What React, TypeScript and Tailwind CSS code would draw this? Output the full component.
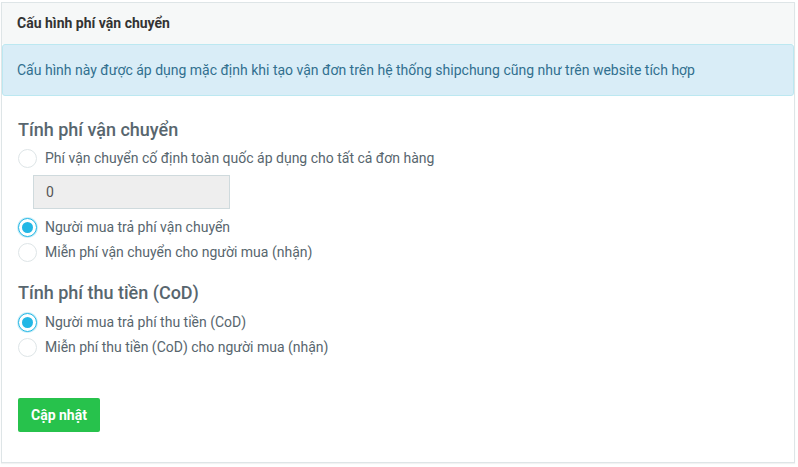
import React from "react";

interface RadioProps {
  label: string;
  checked?: boolean;
}

function Radio({ label, checked }: RadioProps) {
  return (
    <label className="flex items-center h-[25px] text-[14px] text-[#58666e]">
      {checked ? (
        <span className="w-[19px] h-[19px] rounded-full border border-[#23b7e5] shadow-[0_0_0_1px_rgba(35,183,229,0.25)] bg-white flex items-center justify-center">
          <span className="w-[11px] h-[11px] rounded-full bg-[#23b7e5]" />
        </span>
      ) : (
        <span className="w-[19px] h-[19px] rounded-full border border-[#dee5e7] bg-white" />
      )}
      <span className="ml-[8px]">{label}</span>
    </label>
  );
}

export default function App() {
  return (
    <div className="w-[798px] h-[467px] bg-white pt-[2px] pl-[1px] font-['Roboto',sans-serif]">
      <div className="w-[794px] h-[461px] border border-[#dee5e7] bg-white flex flex-col shadow-[0_1px_1px_rgba(0,0,0,0.05)]">
        <div className="h-[41px] bg-[#f6f8f8] flex items-center px-[15px] text-[14px] font-bold text-[#333]">
          Cấu hình phí vận chuyển
        </div>
        <div className="h-[52px] bg-[#d9edf7] border border-[#bce8f1] rounded-[3px] flex items-center px-[14px] text-[14px] text-[#31708f]">
          Cấu hình này được áp dụng mặc định khi tạo vận đơn trên hệ thống shipchung cũng như trên website tích hợp
        </div>
        <div className="px-[16px] flex flex-col">
          <h3 className="mt-[22px] text-[18px] leading-[24px] font-medium text-[#58666e]">Tính phí vận chuyển</h3>
          <div className="mt-[4px]">
            <Radio label="Phí vận chuyển cố định toàn quốc áp dụng cho tất cả đơn hàng" />
          </div>
          <div className="mt-[4px] ml-[15px] w-[197px] h-[34px] bg-[#eeeeee] border border-[#cfdadd] flex items-center px-[12px] text-[14px] text-[#555]">
            0
          </div>
          <div className="mt-[6px]">
            <Radio label="Người mua trả phí vận chuyển" checked />
            <Radio label="Miễn phí vận chuyển cho người mua (nhận)" />
          </div>
          <h3 className="mt-[16px] text-[18px] leading-[24px] font-medium text-[#58666e]">Tính phí thu tiền (CoD)</h3>
          <div className="mt-[5px]">
            <Radio label="Người mua trả phí thu tiền (CoD)" checked />
            <Radio label="Miễn phí thu tiền (CoD) cho người mua (nhận)" />
          </div>
          <div className="mt-[38px]">
            <button
              type="button"
              className="h-[34px] px-[13px] rounded-[2px] bg-[#27c24c] text-white text-[14px] font-bold"
            >
              Cập nhật
            </button>
          </div>
        </div>
      </div>
    </div>
  );
}
